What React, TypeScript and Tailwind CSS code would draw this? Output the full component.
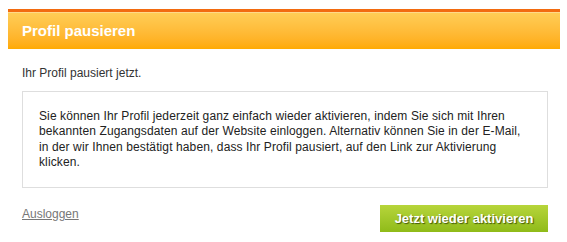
import React from 'react'

const App: React.FC = () => {
  return (
    <div className="w-[567px] h-[242px] bg-white font-['Liberation_Sans',Arial,sans-serif] text-[12px] text-[#333]">
      <div className="pt-[9px] pl-[8px] pr-[7px]">
        <div className="border-t-[3px] border-[#f26b10]">
          <div className="h-[37px] flex items-center pl-[14px] border-t border-[#ffd98a] bg-gradient-to-b from-[#ffcd55] to-[#ffaa00]">
            <h1 className="text-[15px] font-bold text-white">Profil pausieren</h1>
          </div>
        </div>
      </div>

      <div className="px-[22px] pr-[19px]">
        <p className="mt-[17px] leading-[15px]">Ihr Profil pausiert jetzt.</p>

        <div className="mt-[10px] h-[97px] border border-[#dedede] pl-[16px] pt-[17px] text-[#222] leading-[15.4px] tracking-[0.11px]">
          Sie können Ihr Profil jederzeit ganz einfach wieder aktivieren, indem Sie sich mit Ihren
          <br />
          bekannten Zugangsdaten auf der Website einloggen. Alternativ können Sie in der E-Mail,
          <br />
          in der wir Ihnen bestätigt haben, dass Ihr Profil pausiert, auf den Link zur Aktivierung
          <br />
          klicken.
        </div>

        <div className="mt-[17px] flex items-start justify-between">
          <a href="#" className="mt-[2px] text-[#777] underline leading-[15px]">
            Ausloggen
          </a>
          <button className="h-[27px] w-[168px] bg-gradient-to-b from-[#b7d53a] to-[#8fbb18] text-[13px] font-bold text-white [text-shadow:1px_1px_1px_rgba(50,70,0,0.85)]">
            Jetzt wieder aktivieren
          </button>
        </div>
      </div>
    </div>
  )
}

export default App
